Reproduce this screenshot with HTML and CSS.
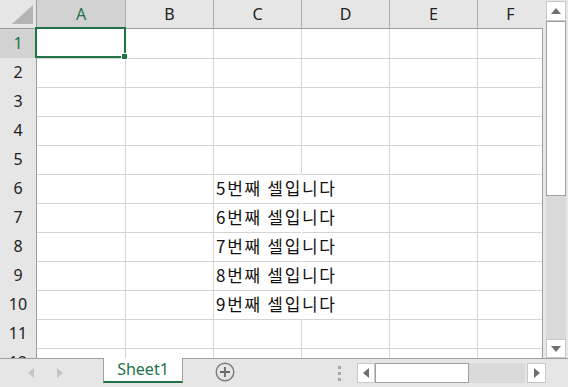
FILE: index.html
```html
<!DOCTYPE html>
<html>
<head>
    <title>Sheet1</title>
    <link rel="stylesheet" href="styles.css">
</head>
<body>
<div class="app">
    <div class="main">
        <div class="sheet">
            <div class="row head">
                <div class="corner">
                    <svg width="36" height="28" viewBox="0 0 36 28"><polygon points="12,24 33,24 33,5" fill="#b4b4b4"/></svg>
                </div>
                <div class="colhead sel">A</div>
                <div class="colhead">B</div>
                <div class="colhead">C</div>
                <div class="colhead">D</div>
                <div class="colhead">E</div>
                <div class="colhead last">F</div>
            </div>
            <div class="row">
                <div class="rowhead sel">1</div>
                <div class="cell active"><div class="cursor"><span class="handle"></span></div></div>
                <div class="cell"></div><div class="cell"></div><div class="cell"></div><div class="cell"></div><div class="cell"></div>
            </div>
            <div class="row"><div class="rowhead">2</div><div class="cell"></div><div class="cell"></div><div class="cell"></div><div class="cell"></div><div class="cell"></div><div class="cell"></div></div>
            <div class="row"><div class="rowhead">3</div><div class="cell"></div><div class="cell"></div><div class="cell"></div><div class="cell"></div><div class="cell"></div><div class="cell"></div></div>
            <div class="row"><div class="rowhead">4</div><div class="cell"></div><div class="cell"></div><div class="cell"></div><div class="cell"></div><div class="cell"></div><div class="cell"></div></div>
            <div class="row"><div class="rowhead">5</div><div class="cell"></div><div class="cell"></div><div class="cell"></div><div class="cell"></div><div class="cell"></div><div class="cell"></div></div>
            <div class="row"><div class="rowhead">6</div><div class="cell"></div><div class="cell"></div><div class="cell text">5번째 셀입니다</div><div class="cell"></div><div class="cell"></div><div class="cell"></div></div>
            <div class="row"><div class="rowhead">7</div><div class="cell"></div><div class="cell"></div><div class="cell text">6번째 셀입니다</div><div class="cell"></div><div class="cell"></div><div class="cell"></div></div>
            <div class="row"><div class="rowhead">8</div><div class="cell"></div><div class="cell"></div><div class="cell text">7번째 셀입니다</div><div class="cell"></div><div class="cell"></div><div class="cell"></div></div>
            <div class="row"><div class="rowhead">9</div><div class="cell"></div><div class="cell"></div><div class="cell text">8번째 셀입니다</div><div class="cell"></div><div class="cell"></div><div class="cell"></div></div>
            <div class="row"><div class="rowhead">10</div><div class="cell"></div><div class="cell"></div><div class="cell text">9번째 셀입니다</div><div class="cell"></div><div class="cell"></div><div class="cell"></div></div>
            <div class="row"><div class="rowhead">11</div><div class="cell"></div><div class="cell"></div><div class="cell"></div><div class="cell"></div><div class="cell"></div><div class="cell"></div></div>
            <div class="row"><div class="rowhead">12</div><div class="cell"></div><div class="cell"></div><div class="cell"></div><div class="cell"></div><div class="cell"></div><div class="cell"></div></div>
        </div>

        <div class="vscroll">
            <div class="sbtn vbtn">
                <svg width="10" height="6" viewBox="0 0 10 6"><polygon points="0,6 10,6 5,0" fill="#6e6e6e"/></svg>
            </div>
            <div class="vthumb"></div>
            <div class="vtrack"></div>
            <div class="sbtn vbtn">
                <svg width="10" height="6" viewBox="0 0 10 6"><polygon points="0,0 10,0 5,6" fill="#6e6e6e"/></svg>
            </div>
        </div>
    </div>

    <div class="tabbar">
        <div class="nav">
            <svg width="6" height="10" viewBox="0 0 6 10"><polygon points="6,0 6,10 0,5" fill="#c3c3c3"/></svg>
            <svg width="6" height="10" viewBox="0 0 6 10"><polygon points="0,0 0,10 6,5" fill="#c3c3c3"/></svg>
        </div>
        <div class="tab">Sheet1</div>
        <div class="add">
            <svg width="20" height="20" viewBox="0 0 20 20">
                <circle cx="10" cy="10" r="8.8" fill="none" stroke="#7a7a7a" stroke-width="1.4"/>
                <path d="M10 5v10M5 10h10" stroke="#6a6a6a" stroke-width="1.8"/>
            </svg>
        </div>
        <div class="split"><span></span><span></span><span></span></div>
        <div class="hscroll">
            <div class="sbtn hbtn">
                <svg width="6" height="10" viewBox="0 0 6 10"><polygon points="6,0 6,10 0,5" fill="#6e6e6e"/></svg>
            </div>
            <div class="hthumb"></div>
            <div class="htrack"></div>
            <div class="sbtn hbtn right">
                <svg width="6" height="10" viewBox="0 0 6 10"><polygon points="0,0 0,10 6,5" fill="#6e6e6e"/></svg>
            </div>
        </div>
    </div>
</div>
</body>
</html>
```

FILE: styles.css
```css
html, body {
    margin: 0;
    padding: 0;
}
body {
    font-family: "Noto Sans", "Noto Sans CJK KR", sans-serif;
    background-color: #e6e6e6;
}
.app {
    width: 568px;
    height: 387px;
    overflow: hidden;
    display: flex;
    flex-direction: column;
}
.main {
    display: flex;
    height: 358px;
}
.sheet {
    width: 543px;
    height: 358px;
    overflow: hidden;
    background-color: #fff;
    display: flex;
    flex-direction: column;
    flex-shrink: 0;
}
.row {
    display: grid;
    grid-template-columns: 37px 89px 88px 88px 88px 88px 65px;
    height: 29px;
    flex-shrink: 0;
}
.row div {
    box-sizing: border-box;
}
.corner {
    background-color: #e6e6e6;
    border-right: 1px solid #9b9b9b;
    border-bottom: 1px solid #9b9b9b;
}
.corner svg {
    display: block;
}
.colhead {
    background-color: #e6e6e6;
    border-right: 1px solid #ababab;
    border-bottom: 1px solid #9b9b9b;
    color: #222;
    font-size: 16px;
    line-height: 28px;
    text-align: center;
}
.colhead.last {
    border-right: none;
}
.rowhead {
    background-color: #e6e6e6;
    border-right: 1px solid #9b9b9b;
    border-bottom: 1px solid #ababab;
    color: #222;
    font-size: 16px;
    line-height: 29px;
    text-align: center;
}
.colhead.sel, .rowhead.sel {
    background-color: #d2d2d2;
    color: #217346;
}
.cell {
    border-right: 1px solid #d4d4d4;
    border-bottom: 1px solid #d4d4d4;
}
.cell:last-child {
    border-right: 1px solid #a0a0a0;
}
/* text spills over into D, so the gridline under it is hidden */
.cell.text {
    border-right-color: #fff;
    font-family: "Noto Sans CJK KR", sans-serif;
    font-size: 17px;
    letter-spacing: 1.7px;
    line-height: 28px;
    padding-left: 2px;
    color: #111;
    white-space: nowrap;
}
.cell.active {
    position: relative;
}
.cursor {
    position: absolute;
    left: -2px;
    top: -2px;
    width: 91px;
    height: 31px;
    border: 2px solid #217346;
}
.handle {
    position: absolute;
    right: -4px;
    bottom: -4px;
    width: 5px;
    height: 5px;
    background-color: #217346;
    border: 1px solid #fff;
}

/* scrollbars */
.vscroll {
    width: 25px;
    display: flex;
    flex-direction: column;
    padding: 1px 2px 0 3px;
    box-sizing: border-box;
}
.sbtn {
    box-sizing: border-box;
    background-color: #fff;
    border: 1px solid #c8c8c8;
    display: flex;
    align-items: center;
    justify-content: center;
}
.vbtn {
    height: 20px;
    flex-shrink: 0;
}
.vbtn:last-child {
    height: 19px;
}
.vthumb {
    height: 175px;
    background-color: #fff;
    border: 1px solid #a0a0a0;
    box-sizing: border-box;
    flex-shrink: 0;
}
.vtrack {
    flex: 1;
    background-color: #dadada;
}

/* sheet tabs */
.tabbar {
    display: flex;
    align-items: flex-start;
    height: 29px;
    border-top: 1px solid #a0a0a0;
    box-sizing: border-box;
}
.nav {
    width: 103px;
    display: flex;
    gap: 23px;
    padding: 9px 0 0 28px;
    box-sizing: border-box;
}
.tab {
    width: 80px;
    height: 25px;
    margin-top: -1px;
    background-color: #fff;
    border-left: 1px solid #a0a0a0;
    border-right: 1px solid #a0a0a0;
    border-bottom: 2px solid #217346;
    box-sizing: border-box;
    color: #217346;
    font-size: 16px;
    line-height: 23px;
    text-align: center;
}
.add {
    width: 150px;
    padding: 3px 0 0 32px;
    box-sizing: border-box;
}
.add svg {
    display: block;
}
.split {
    display: flex;
    flex-direction: column;
    gap: 3px;
    margin: 7px 0 0 5px;
}
.split span {
    width: 3px;
    height: 3px;
    background-color: #a8a8a8;
}
.hscroll {
    display: flex;
    margin: 4px 0 0 16px;
    height: 20px;
}
.hbtn {
    width: 18px;
}
.hbtn.right {
    width: 19px;
    margin-left: 2px;
}
.hthumb {
    width: 94px;
    background-color: #fff;
    border: 1px solid #a0a0a0;
    box-sizing: border-box;
}
.htrack {
    width: 56px;
    background-color: #dadada;
}
```
